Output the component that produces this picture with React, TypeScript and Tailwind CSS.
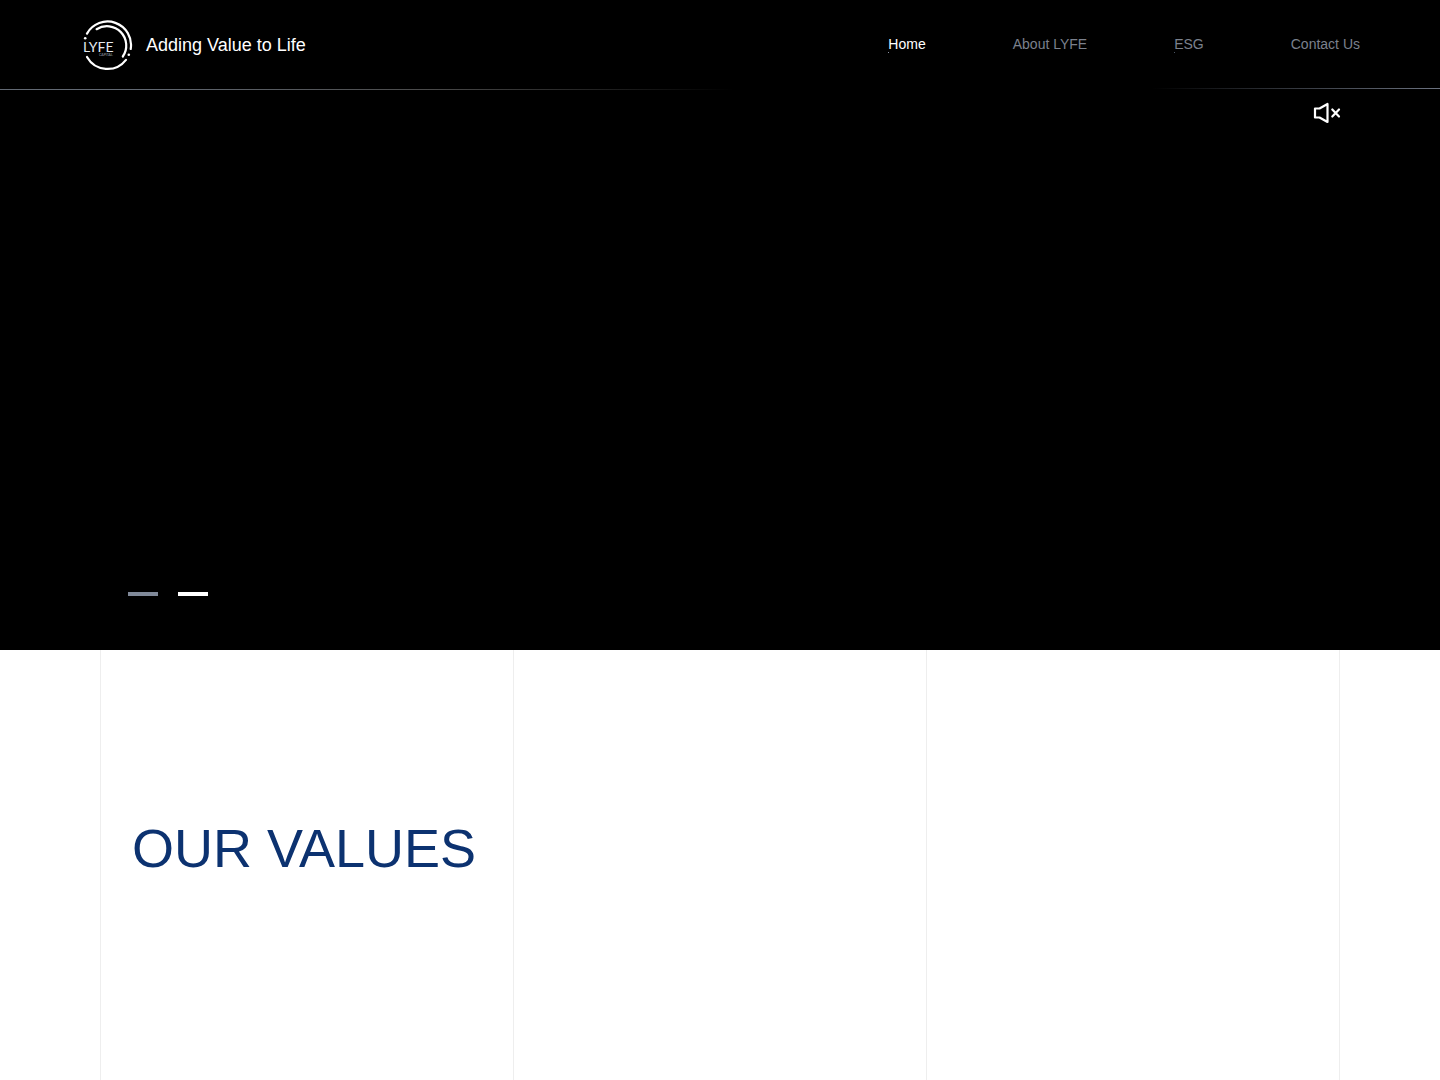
import React from "react";

const Logo: React.FC = () => (
    <svg width="52" height="52" viewBox="0 0 52 52" fill="none" aria-label="LYFE Capital" role="img">
        <g stroke="#fff" strokeWidth="2.2" strokeLinecap="round">
            <path d="M5 14.6A23.5 23.5 0 0 1 48.7 30" />
            <path d="M5 38A23.5 23.5 0 0 0 44 40.8" />
            <path d="M14.6 10.2A19.3 19.3 0 0 1 40.8 37.5" />
        </g>
        <circle cx="3.2" cy="19.3" r="1.3" fill="#fff" />
        <circle cx="46.8" cy="35.8" r="1.3" fill="#fff" />
        <text x="1" y="33" fontSize="14" fontFamily="Lato, sans-serif" fill="#e5e9f0">
            LYFE
        </text>
        <text x="17" y="37" fontSize="3.5" fontFamily="Lato, sans-serif" fill="#9ca3af">
            CAPITAL
        </text>
    </svg>
);

const MuteIcon: React.FC = () => (
    <svg
        width="28"
        height="22"
        viewBox="0 0 28 22"
        fill="none"
        stroke="#fff"
        strokeWidth="2.2"
        strokeLinejoin="round"
        strokeLinecap="round"
    >
        <path d="M2 6.5H6.5L14.5 2V20L6.5 15.5H2Z" />
        <path d="M19.3 7.5L26 14.5M26 7.5L19.3 14.5" />
    </svg>
);

const Header: React.FC = () => {
    const links = [
        { label: "Home", href: "#home", style: "text-white before:bg-[#8b93a3]" },
        { label: "About LYFE", href: "#about", style: "text-[#7b818d]" },
        { label: "ESG", href: "#esg", style: "text-[#7b818d] before:bg-[#4b5563]" },
        { label: "Contact Us", href: "#contact", style: "text-[#7b818d]" },
    ];

    return (
        <header>
            <div className="flex items-center justify-between px-20 pt-[19px] pb-[18px]">
                <a href="#home" className="flex items-center gap-3 pl-[2px] text-lg text-white">
                    <Logo />
                    <span>Adding Value to Life</span>
                </a>
                <nav className="flex gap-[87px] pb-[2px] text-sm">
                    {links.map((link) => (
                        <a
                            key={link.label}
                            href={link.href}
                            className={`relative before:absolute before:bottom-px before:left-0 before:size-px ${link.style}`}
                        >
                            {link.label}
                        </a>
                    ))}
                </nav>
            </div>
            {/* divider fades out towards the middle from both sides */}
            <div className="-mt-px h-px bg-linear-to-r from-transparent from-80% to-[#6b7280]" />
            <div className="h-px bg-linear-to-r from-[#626973] from-10% via-[#4a4a4a] via-30% to-transparent to-51%" />
        </header>
    );
};

const Hero: React.FC = () => (
    <section id="home" className="flex min-h-[650px] flex-col bg-black">
        <Header />
        <div className="flex flex-1 flex-col justify-between pt-3 pb-[54px]">
            <button type="button" aria-label="Unmute" className="mr-[99px] self-end">
                <MuteIcon />
            </button>
            <div className="flex gap-5 px-32">
                <button type="button" aria-label="Slide 1" className="h-1 w-[30px] bg-[#808999]" />
                <button type="button" aria-label="Slide 2" className="h-1 w-[30px] bg-white" />
            </div>
        </div>
    </section>
);

const Values: React.FC = () => (
    <section id="about" className="px-[100px]">
        <div className="grid grid-cols-3 border-r border-[#eeeeee]">
            <div className="border-l border-[#eeeeee] pt-[166px] pb-[200px] pl-[31px]">
                <h2 className="text-[54px] leading-[64px] whitespace-nowrap text-[#0c3270]">OUR VALUES</h2>
            </div>
            <div className="border-l border-[#eeeeee]" />
            <div className="border-l border-[#eeeeee]" />
        </div>
    </section>
);

export default function App() {
    return (
        <main className="bg-white font-['Liberation_Sans',Arial,sans-serif]">
            <Hero />
            <Values />
        </main>
    );
}
